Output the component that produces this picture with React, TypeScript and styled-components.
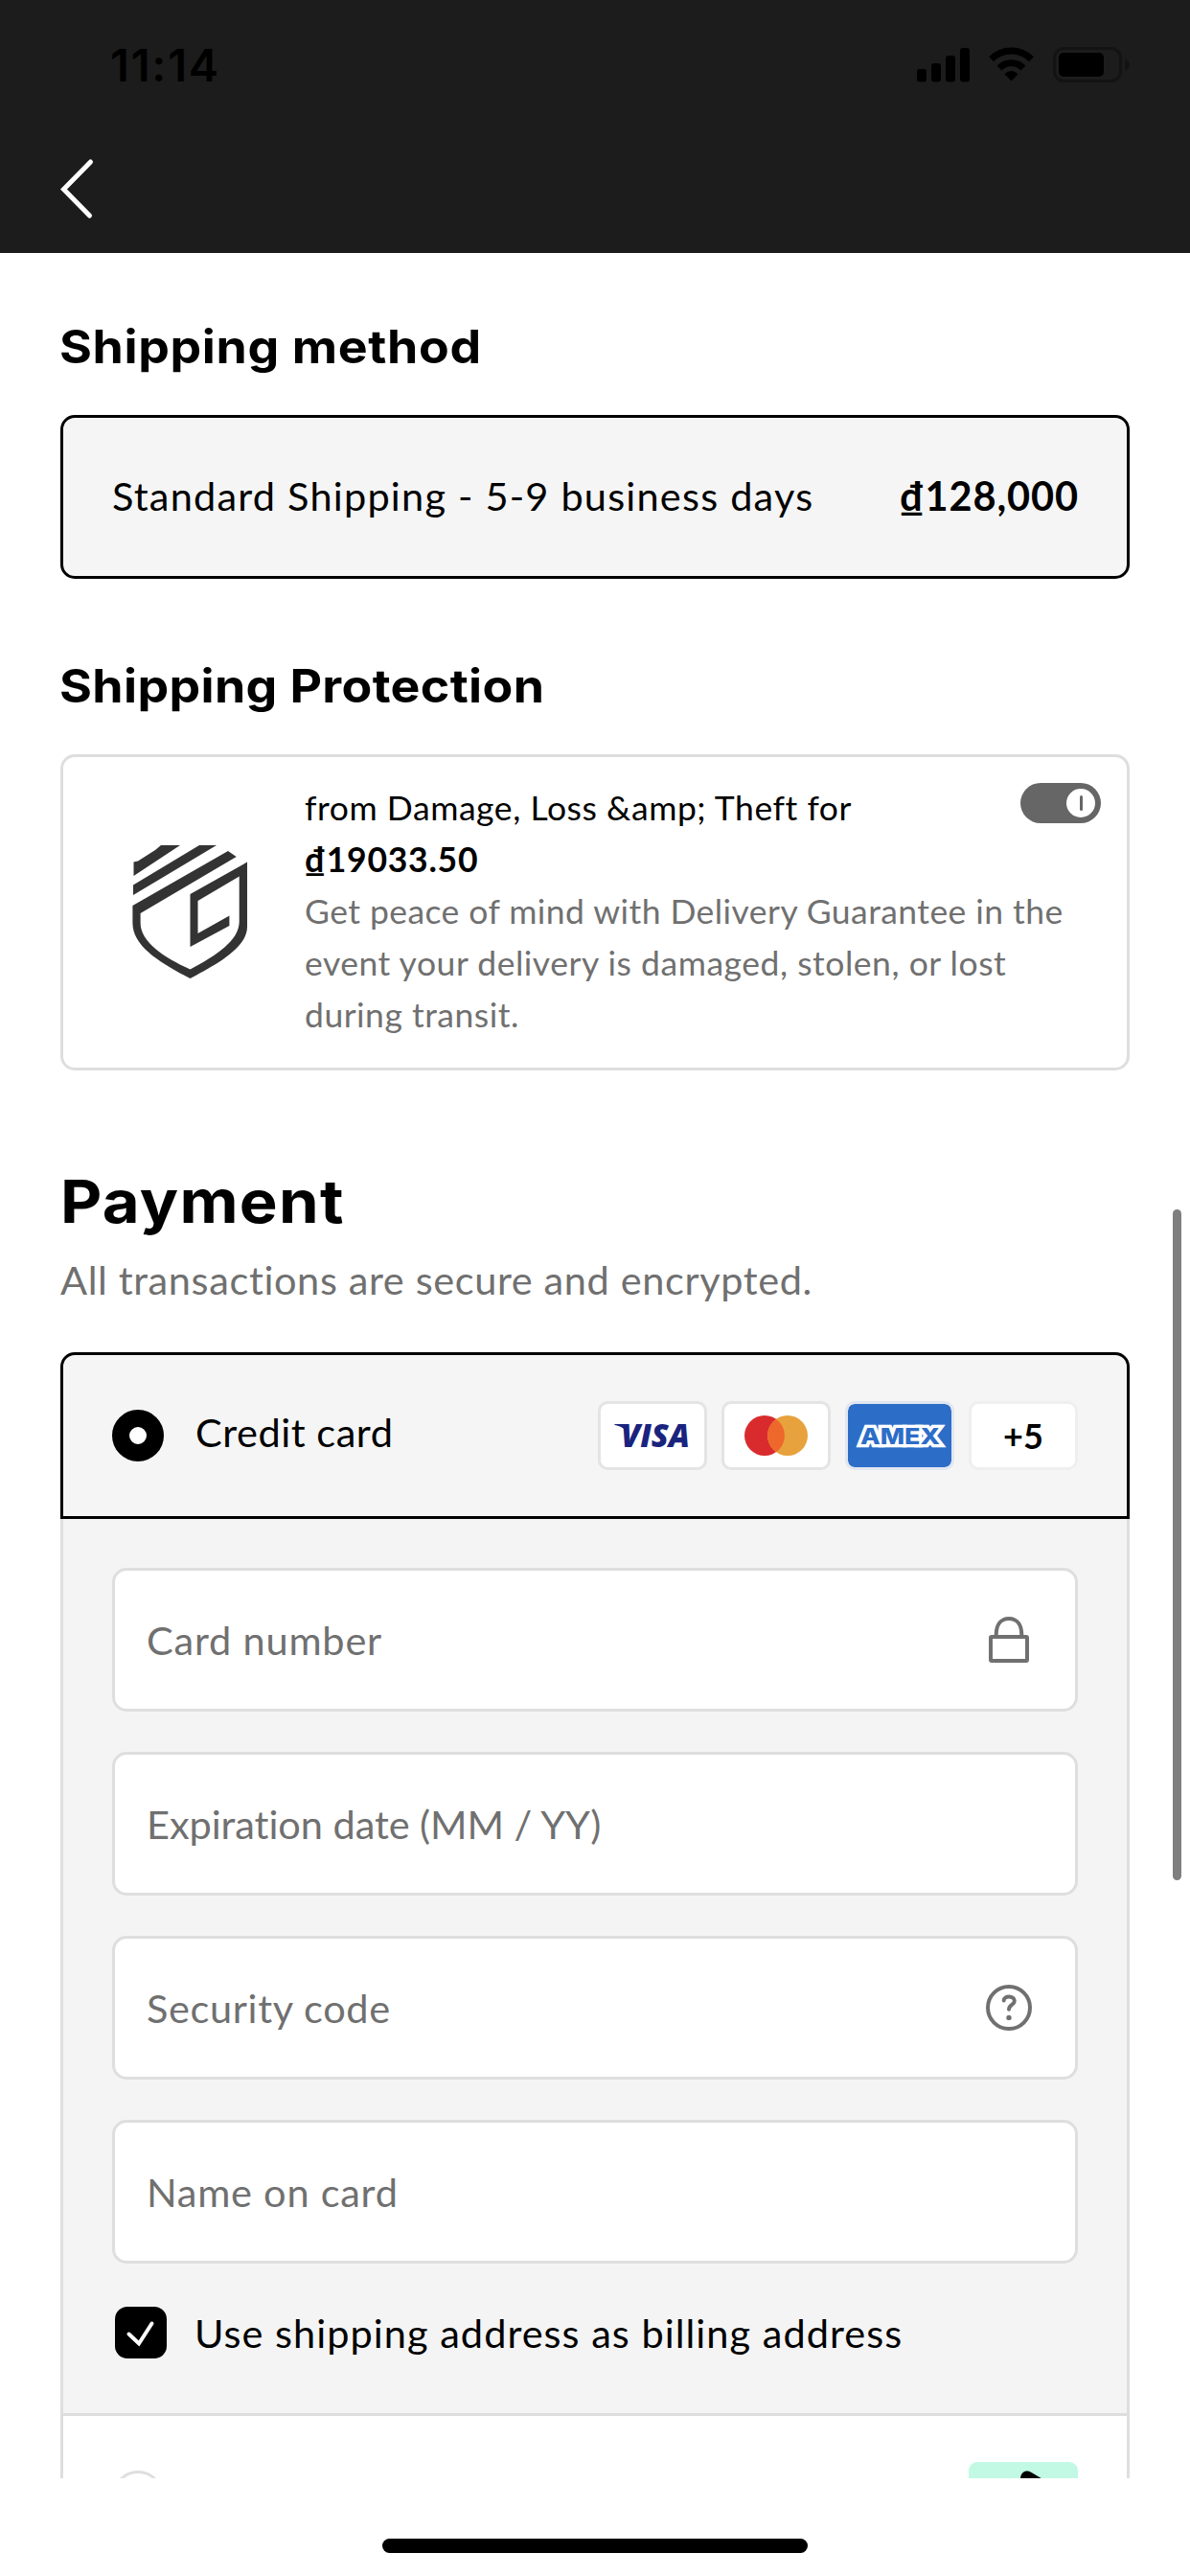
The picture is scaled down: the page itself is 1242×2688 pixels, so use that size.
import React from 'react';
import styled, { createGlobalStyle } from 'styled-components';

const BODY = '"Lato", "Open Sans", sans-serif';
const HEADING = '"Inter", "Open Sans", sans-serif';
const LINE = '#dedede';
const MUTED = '#707070';

const GlobalStyle = createGlobalStyle`
  * { box-sizing: border-box; }
  body { margin: 0; background: #fff; }
  h1, h2, p { margin: 0; }
`;

const Screen = styled.div`
  position: relative;
  display: flex;
  flex-direction: column;
  width: 1242px;
  height: 2688px;
  overflow: hidden;
  background: #fff;
  color: #000;
  font-family: ${BODY};
`;

const TopBar = styled.header`
  flex: none;
  display: flex;
  flex-direction: column;
  height: 264px;
  background: #1c1c1c;
`;

const StatusBar = styled.div`
  display: flex;
  align-items: center;
  justify-content: space-between;
  height: 136px;
  padding: 0 63px 0 115px;
`;

const Clock = styled.span`
  font: 600 47px/60px ${HEADING};
  letter-spacing: 1.8px;
`;

const StatusIcons = styled.div`
  display: flex;
  align-items: center;
`;

const Nav = styled.nav`
  display: flex;
  padding: 27px 60px;
`;

const BackButton = styled.button`
  display: flex;
  padding: 0;
  border: 0;
  background: none;
`;

const Main = styled.main`
  flex: none;
  height: 2322px;
  padding: 68px 63px 0;
  overflow: hidden;
`;

const Title = styled.h2<{ $large?: boolean; $spacing: number }>`
  width: max-content;
  margin-left: ${p => (p.$large ? 0 : -1)}px;
  font-family: ${HEADING};
  font-weight: 700;
  font-size: ${p => (p.$large ? 62 : 48)}px;
  line-height: ${p => (p.$large ? 76 : 60)}px;
  letter-spacing: ${p => p.$spacing}px;
  transform: scaleX(1.08);
  transform-origin: left;
`;

const Section = styled.section<{ $top: number }>`
  margin-top: ${p => p.$top}px;
`;

const Text = styled.span<{ $spacing?: number; $muted?: boolean; $bold?: boolean }>`
  font-size: 41.5px;
  line-height: 60px;
  white-space: nowrap;
  letter-spacing: ${p => p.$spacing ?? 0}px;
  font-weight: ${p => (p.$bold ? 700 : 400)};
  color: ${p => (p.$muted ? MUTED : '#000')};
`;

const Subtitle = styled(Text)`
  display: block;
  margin-top: 13px;
`;

const ShippingOption = styled.div`
  display: flex;
  align-items: center;
  justify-content: space-between;
  height: 171px;
  margin-top: 41px;
  padding: 0 50px 3px 51px;
  border: 3px solid #000;
  border-radius: 15px;
  background: #f5f5f5;
`;

const ProtectionCard = styled.div`
  display: grid;
  grid-template-columns: 121px 1fr;
  column-gap: 59px;
  height: 330px;
  margin-top: 41px;
  padding: 26px 27px 0 72px;
  border: 3px solid ${LINE};
  border-radius: 15px;
`;

const LogoCell = styled.div`
  padding-top: 66px;
`;

const ProtectionLine = styled.p<{ $spacing: number; $muted?: boolean; $bold?: boolean }>`
  font-size: 35.5px;
  line-height: 54px;
  white-space: nowrap;
  letter-spacing: ${p => p.$spacing}px;
  font-weight: ${p => (p.$bold ? 700 : 400)};
  color: ${p => (p.$muted ? MUTED : '#000')};
`;

const Toggle = styled.div`
  float: right;
  display: flex;
  align-items: center;
  justify-content: flex-end;
  width: 84px;
  height: 42px;
  margin-top: 1px;
  padding-right: 6px;
  border-radius: 21px;
  background: #666;
`;

const Knob = styled.div`
  display: flex;
  align-items: center;
  justify-content: center;
  width: 30px;
  height: 30px;
  border-radius: 50%;
  background: #fff;
  &::after {
    content: '';
    width: 3px;
    height: 16px;
    border-radius: 2px;
    background: #666;
  }
`;

const Methods = styled.div`
  margin-top: 46px;
`;

const MethodHeader = styled.div`
  display: flex;
  align-items: center;
  height: 174px;
  padding: 0 51px;
  border: 3px solid #000;
  border-radius: 15px 15px 0 0;
  background: #f5f5f5;
`;

const Radio = styled.span<{ $checked?: boolean }>`
  flex: none;
  width: 54px;
  height: 54px;
  border: ${p => (p.$checked ? '18px solid #000' : `3px solid ${LINE}`)};
  border-radius: 50%;
  background: #fff;
`;

const MethodName = styled(Text)`
  flex: 1;
  padding: 0 0 8px 33px;
`;

const Badges = styled.div`
  display: flex;
  gap: 15px;
`;

const Badge = styled.div<{ $bg?: string; $edge?: string }>`
  display: flex;
  align-items: center;
  justify-content: center;
  width: 114px;
  height: 72px;
  border: 3px solid ${p => p.$edge ?? '#e4e4e4'};
  border-radius: 10px;
  background: ${p => p.$bg ?? '#fff'};
  background-clip: padding-box;
`;

const More = styled.span`
  font: 700 36px/40px ${BODY};
`;

const MethodForm = styled.div`
  display: flex;
  flex-direction: column;
  gap: 42px;
  padding: 51px 51px 57px;
  border: solid ${LINE};
  border-width: 0 3px 3px;
  background: #f4f4f4;
`;

const Field = styled.div`
  display: flex;
  align-items: center;
  justify-content: space-between;
  height: 150px;
  padding: 0 42px 0 33px;
  border: 3px solid ${LINE};
  border-radius: 15px;
  background: #fff;
`;

const CheckRow = styled.label`
  display: flex;
  align-items: center;
  gap: 29px;
  height: 54px;
  margin-top: 3px;
  padding-left: 3px;
`;

const Checkbox = styled.span`
  display: flex;
  align-items: center;
  justify-content: center;
  width: 54px;
  height: 54px;
  border-radius: 13px;
  background: #000;
`;

const NextMethod = styled.div`
  display: flex;
  align-items: center;
  justify-content: space-between;
  height: 168px;
  padding: 0 51px;
  border: solid ${LINE};
  border-width: 0 3px;
`;

const AfterpayBadge = styled.div`
  width: 114px;
  height: 72px;
  border-radius: 9px;
  background: #c1f9e5;
`;

const HomeArea = styled.footer`
  flex: 1;
  display: flex;
  justify-content: center;
  padding-top: 63px;
`;

const HomeIndicator = styled.div`
  width: 444px;
  height: 15px;
  border-radius: 8px;
  background: #000;
`;

const ScrollThumb = styled.div`
  position: absolute;
  top: 1262px;
  right: 9px;
  width: 9px;
  height: 700px;
  border-radius: 5px;
  background: #7f7f7f;
`;

const StatusGlyphs = () => (
  <svg width="222" height="38" viewBox="0 0 222 38">
    <rect x="0" y="23" width="10" height="13.500" rx="3" />
    <rect x="15" y="17" width="10" height="19.500" rx="3" />
    <rect x="30" y="9" width="10" height="27.500" rx="3" />
    <rect x="45" y="1" width="10" height="35.500" rx="3" />
    <g transform="translate(75 0.500)">
      <g fill="none" stroke="#000" strokeWidth="7">
        <path d="M2.600 12.300A29.500 29.500 0 0 1 44.400 12.300" />
        <path d="M11 21.500A17.300 17.300 0 0 1 36 21.500" />
      </g>
      <path d="M16.500 27.700Q23.500 21.500 30.500 27.700L23.500 35Z" />
    </g>
    <rect x="143.500" y="1.500" width="69" height="34" rx="10" fill="none" stroke="#131313" strokeWidth="3" />
    <rect x="148" y="6" width="47" height="25" rx="5" />
    <path d="M217 12Q222 15 222 18.500T217 25Z" fill="#131313" />
  </svg>
);

const Chevron = () => (
  <svg width="42" height="68" viewBox="0 0 42 68">
    <path d="M34.500 6L6.500 34.500L33.500 62" fill="none" stroke="#fff" strokeWidth="5" strokeLinecap="round" />
  </svg>
);

const ShieldLogo = () => (
  <svg width="121" height="139" viewBox="0 0 121 139" fill="#333">
    <path d="M30 0H50L1.500 32V17.500L6 16.500L24 5Z" />
    <path d="M70 0H88L1 52V41.500Z" />
    <path
      fillRule="evenodd"
      d="M100 6L108.700 12L8.600 71V81C8.600 101 33 117 60.500 129.500C88 115 111.700 99 111.700 79.700V32.500L68.500 58V92L101.400 73.500V84L60.500 106V51L120 17.500V85C120 106 91 123 60.500 139C30 123 0.400 106 0.400 81V63Z"
    />
  </svg>
);

const VisaLogo = () => (
  <svg width="102" height="60" viewBox="0 0 102 60">
    <text x="18" y="42" fontFamily="Open Sans, sans-serif" fontStyle="italic" fontWeight="800" fontSize="33.500" fill="#1a237e" textLength="72" lengthAdjust="spacingAndGlyphs">VISA</text>
    <path d="M11.500 18H22L26 29C23 23 18 20 11.500 19Z" fill="#1a237e" />
  </svg>
);

const MastercardLogo = () => (
  <svg width="66" height="42" viewBox="0 0 66 42">
    <circle cx="21" cy="21" r="21" fill="#d92b2d" />
    <circle cx="45" cy="21" r="21" fill="#e7a23e" />
    <path d="M33 3.800A21 21 0 0 1 33 38.200A21 21 0 0 1 33 3.800Z" fill="#ee672b" />
  </svg>
);

const AmexLogo = () => (
  <svg width="102" height="60" viewBox="0 0 102 60">
    <text x="10" y="38.500" fontFamily="Inter, sans-serif" fontWeight="800" fontSize="23.500" fill="#2c6dc8" stroke="#fff" strokeWidth="6.500" paintOrder="stroke" textLength="83" lengthAdjust="spacingAndGlyphs">AMEX</text>
  </svg>
);

const LockIcon = () => (
  <svg width="54" height="54" viewBox="0 0 54 54" fill="none" stroke={MUTED} strokeWidth="4">
    <rect x="8" y="24" width="38" height="25" rx="1" />
    <path d="M13.700 24V22C13.700 12 18 5 27 5S40.300 12 40.300 22V24" />
  </svg>
);

const HelpIcon = () => (
  <svg width="54" height="54" viewBox="0 0 54 54" fill="none" stroke={MUTED} strokeWidth="4" strokeLinecap="round">
    <circle cx="27" cy="27" r="22" />
    <path d="M21.700 19.500C21.700 14 32.800 14 32.800 20C32.800 24 27 24 27 28.700" />
    <circle cx="27" cy="37.400" r="2.700" fill={MUTED} stroke="none" />
  </svg>
);

const CheckIcon = () => (
  <svg width="54" height="54" viewBox="0 0 54 54">
    <path d="M14.500 28.500L25 38.500L38.500 17.500" fill="none" stroke="#fff" strokeWidth="4" strokeLinecap="round" />
  </svg>
);

const AfterpayMark = () => (
  <svg width="114" height="72" viewBox="0 0 114 72">
    <path d="M54 24V18C54 10.500 60 7.500 66 11.200L84 22Z" />
  </svg>
);

const fields = [
  { label: 'Card number', spacing: 0.8, icon: <LockIcon /> },
  { label: 'Expiration date (MM / YY)', spacing: -0.06 },
  { label: 'Security code', spacing: 0.65, icon: <HelpIcon /> },
  { label: 'Name on card', spacing: 0.75 },
];

export default function App() {
  return (
    <Screen>
      <GlobalStyle />
      <TopBar>
        <StatusBar>
          <Clock>11:14</Clock>
          <StatusIcons><StatusGlyphs /></StatusIcons>
        </StatusBar>
        <Nav>
          <BackButton aria-label="Back"><Chevron /></BackButton>
        </Nav>
      </TopBar>
      <Main>
        <Section $top={0}>
          <Title $spacing={0.6}>Shipping method</Title>
          <ShippingOption>
            <Text $spacing={1.2}>Standard Shipping - 5-9 business days</Text>
            <Text $bold $spacing={0.9}>₫128,000</Text>
          </ShippingOption>
        </Section>
        <Section $top={82}>
          <Title $spacing={0.35}>Shipping Protection</Title>
          <ProtectionCard>
            <LogoCell><ShieldLogo /></LogoCell>
            <div>
              <Toggle role="switch" aria-checked="true"><Knob /></Toggle>
              <ProtectionLine $spacing={0.56}>from Damage, Loss &amp;amp; Theft for</ProtectionLine>
              <ProtectionLine $bold $spacing={0.75}>₫19033.50</ProtectionLine>
              <ProtectionLine $muted $spacing={0.44}>Get peace of mind with Delivery Guarantee in the</ProtectionLine>
              <ProtectionLine $muted $spacing={0.53}>event your delivery is damaged, stolen, or lost</ProtectionLine>
              <ProtectionLine $muted $spacing={0.5}>during transit.</ProtectionLine>
            </div>
          </ProtectionCard>
        </Section>
        <Section $top={99}>
          <Title $large $spacing={1.2}>Payment</Title>
          <Subtitle $muted $spacing={0.62}>All transactions are secure and encrypted.</Subtitle>
          <Methods>
            <MethodHeader>
              <Radio $checked />
              <MethodName $spacing={0.55}>Credit card</MethodName>
              <Badges>
                <Badge><VisaLogo /></Badge>
                <Badge><MastercardLogo /></Badge>
                <Badge $bg="#2c6dc8" $edge="#e1e7f0"><AmexLogo /></Badge>
                <Badge $edge="#efefef"><More>+5</More></Badge>
              </Badges>
            </MethodHeader>
            <MethodForm>
              {fields.map(f => (
                <Field key={f.label}>
                  <Text $muted $spacing={f.spacing}>{f.label}</Text>
                  {f.icon}
                </Field>
              ))}
              <CheckRow>
                <Checkbox><CheckIcon /></Checkbox>
                <Text $spacing={1.02}>Use shipping address as billing address</Text>
              </CheckRow>
            </MethodForm>
            <NextMethod>
              <Radio />
              <AfterpayBadge><AfterpayMark /></AfterpayBadge>
            </NextMethod>
          </Methods>
        </Section>
      </Main>
      <HomeArea><HomeIndicator /></HomeArea>
      <ScrollThumb />
    </Screen>
  );
}
